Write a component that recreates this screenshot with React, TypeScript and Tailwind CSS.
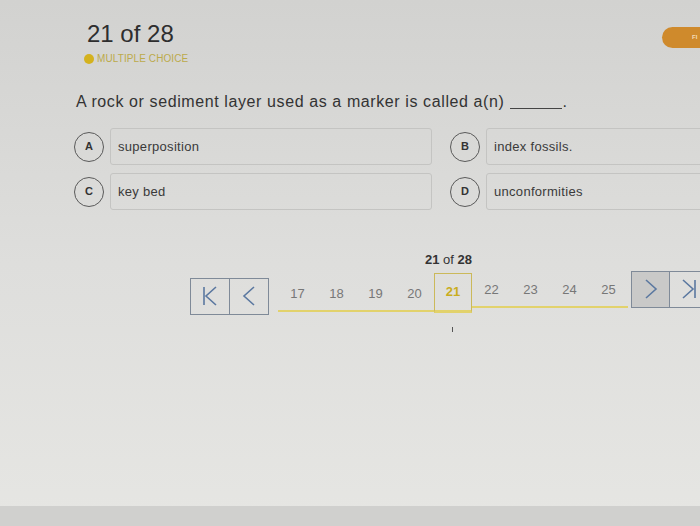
import React from "react";

const font = { fontFamily: '"Liberation Sans", Arial, sans-serif' };

function Letter({ l }: { l: string }) {
  return (
    <div className="w-[30px] h-[30px] rounded-full border border-[#5a5a5a] flex items-center justify-center text-[11px] font-bold text-[#333] shrink-0">
      {l}
    </div>
  );
}

function Option({ l, text, w }: { l: string; text: string; w: string }) {
  return (
    <div className="flex items-center gap-[6px]">
      <Letter l={l} />
      <div className={`${w} h-[37px] border border-[#c4c4c2] rounded-[3px] flex items-center pl-[7px] text-[13px] tracking-[0.3px] text-[#3a3a3a]`}>
        {text}
      </div>
    </div>
  );
}

export default function App() {
  const nums = ["17", "18", "19", "20"];
  const nums2 = ["22", "23", "24", "25"];
  return (
    <div
      className="w-[700px] h-[526px] overflow-hidden relative bg-gradient-to-b from-[#d2d2d0] via-[#dededc] to-[#e6e6e3] flex flex-col"
      style={font}
    >
      <div className="absolute right-[-20px] top-[27px] w-[58px] h-[21px] rounded-full bg-[#cf8a2c] flex items-center pl-[30px] text-[6px] text-[#f3dcb8] font-bold">
        FI
      </div>
      <div className="pl-[87px] pt-[19px] text-[24px] text-[#2e2e2e] leading-[30px]">21 of 28</div>
      <div className="pl-[84px] mt-[2px] flex items-center gap-[3px]">
        <div className="w-[10px] h-[10px] rounded-full bg-[#d4b21e]" />
        <span className="text-[10px] text-[#bcaa4a] tracking-[0.1px]">MULTIPLE CHOICE</span>
      </div>
      <div className="pl-[76px] mt-[24px] text-[16px] tracking-[0.6px] text-[#333] flex items-end">
        <span>A rock or sediment layer used as a marker is called a(n)</span>
        <span className="inline-block w-[52px] border-b border-[#444] mb-[5px] ml-[6px]" />
        <span>.</span>
      </div>
      <div className="pl-[74px] mt-[14px] grid grid-cols-[376px_260px] gap-y-[8px]">
        <Option l="A" text="superposition" w="w-[322px]" />
        <Option l="B" text="index fossils." w="w-[230px]" />
        <Option l="C" text="key bed" w="w-[322px]" />
        <Option l="D" text="unconformities" w="w-[230px]" />
      </div>
      <div className="mt-[40px] pl-[425px] text-[13px] text-[#333]">
        <span className="font-bold">21</span> of <span className="font-bold">28</span>
      </div>
      <div className="mt-[8px] pl-[190px] flex items-start">
        <div className="flex border border-[#7f8a98] h-[37px]">
          <div className="w-[39px] flex items-center justify-center border-r border-[#7f8a98]">
            <svg width="18" height="20" viewBox="0 0 18 20" fill="none" stroke="#5b78a0" strokeWidth="1.6">
              <path d="M3 1v18M15 1L5 10l10 9" />
            </svg>
          </div>
          <div className="w-[38px] flex items-center justify-center">
            <svg width="14" height="20" viewBox="0 0 14 20" fill="none" stroke="#5b78a0" strokeWidth="1.6">
              <path d="M12 1L2 10l10 9" />
            </svg>
          </div>
        </div>
        <div className="ml-[9px] flex items-start">
          {nums.map((n) => (
            <div key={n} className="w-[39px] h-[34px] flex items-center justify-center text-[13px] text-[#777] border-b-2 border-[#e2d26c]">
              {n}
            </div>
          ))}
          <div className="w-[38px] h-[40px] mt-[-5px] border border-[#cbb95a] flex items-center justify-center text-[13px] font-bold text-[#c9ad1e] border-b-[3px] border-b-[#e2d26c]">
            21
          </div>
          {nums2.map((n) => (
            <div key={n} className="w-[39px] h-[34px] mt-[-4px] flex items-center justify-center text-[13px] text-[#777] border-b-2 border-[#e2d26c]">
              {n}
            </div>
          ))}
        </div>
        <div className="ml-[3px] mt-[-7px] flex border border-[#7f8a98] h-[37px]">
          <div className="w-[38px] flex items-center justify-center border-r border-[#7f8a98] bg-[#c9c9c8]">
            <svg width="14" height="20" viewBox="0 0 14 20" fill="none" stroke="#5b78a0" strokeWidth="1.6">
              <path d="M2 1l10 9-10 9" />
            </svg>
          </div>
          <div className="w-[38px] flex items-center justify-center">
            <svg width="18" height="20" viewBox="0 0 18 20" fill="none" stroke="#5b78a0" strokeWidth="1.6">
              <path d="M15 1v18M3 1l10 9-10 9" />
            </svg>
          </div>
        </div>
      </div>
      <div className="pl-[452px] mt-[12px]">
        <div className="w-[1px] h-[5px] bg-[#555]" />
      </div>
      <div className="absolute left-0 right-0 bottom-0 h-[20px] bg-[#d0d0ce]" />
    </div>
  );
}
